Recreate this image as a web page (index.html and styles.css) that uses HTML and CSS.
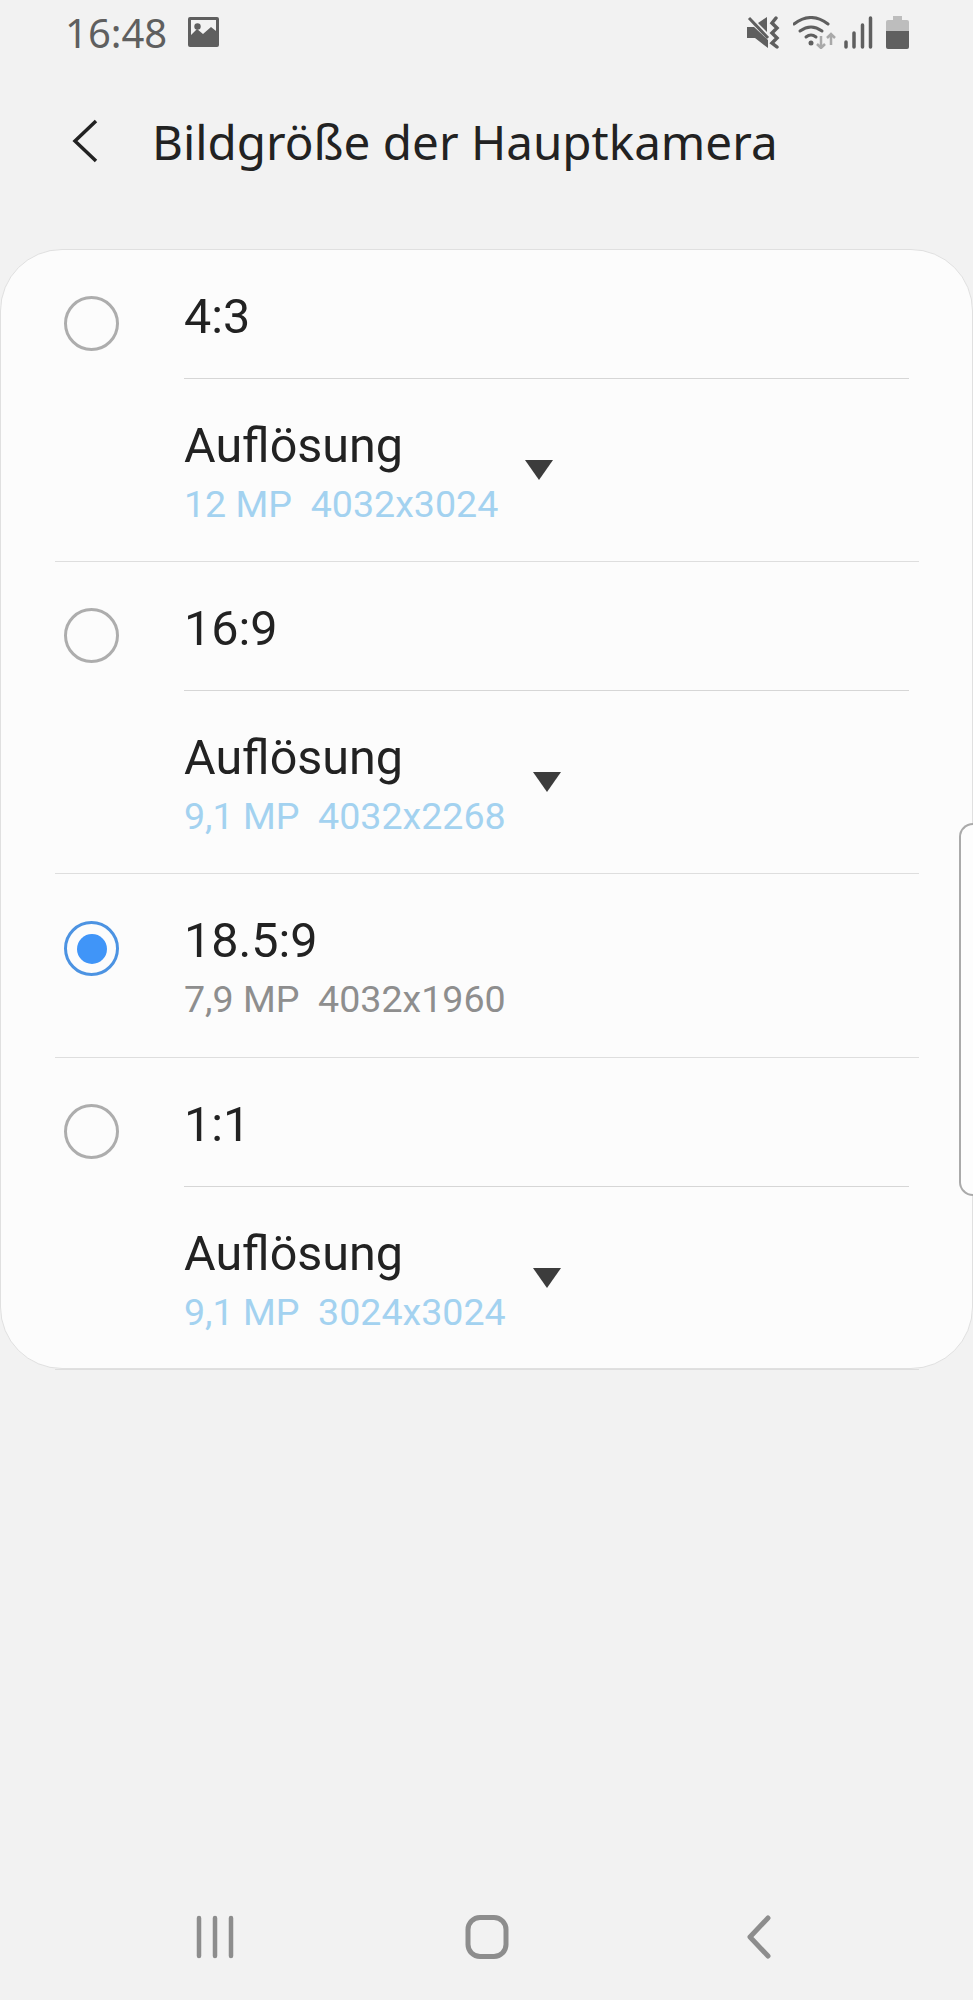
FILE: index.html
```html
<!DOCTYPE html>
<html lang="de">
<head>
    <meta charset="UTF-8">
    <meta name="viewport" content="width=device-width, initial-scale=1.0">
    <title>Bildgröße der Hauptkamera</title>
    <link rel="stylesheet" href="styles.css">
</head>
<body>
    <div class="screen">
        <div class="status-bar">
            <span class="status-time">16:48</span>
            <svg class="icon-image" viewBox="0 0 31 30">
                <path fill="#5f5f5f" fill-rule="evenodd" d="M2 0h27a2 2 0 0 1 2 2v26a2 2 0 0 1-2 2H2a2 2 0 0 1-2-2V2a2 2 0 0 1 2-2zM3 3v15l6-6 6 5 8-7 5 4V3z"/>
                <circle cx="9.500" cy="9.500" r="3.200" fill="#5f5f5f"/>
            </svg>
            <div class="status-right">
                <svg class="icon-mute" viewBox="0 0 33 33">
                    <path fill="#5f5f5f" d="M0 11h7l14 13v8L8 22H0zM11 7l9-6v15z"/>
                    <path fill="none" stroke="#5f5f5f" stroke-width="3" d="M2 2l19 20"/>
                    <path fill="none" stroke="#5f5f5f" stroke-width="3.500" stroke-linecap="round" d="M29 2l-4 5 5 5-5 5 5 5-5 5 5 4"/>
                </svg>
                <svg class="icon-wifi" viewBox="0 0 44 33">
                    <g fill="none" stroke="#5f5f5f" stroke-width="3" stroke-linecap="round">
                        <path d="M1 8q17-13 34 0"/>
                        <path d="M7 15q11-8 22 0"/>
                        <path d="M13 21q5-4 10 0"/>
                    </g>
                    <circle cx="18" cy="27" r="2.500" fill="#5f5f5f"/>
                    <path fill="none" stroke="#a9a9a9" stroke-width="2.500" d="M28 20v12m-4-4l4 4 4-4M38 29V18m-4 4l4-4 4 4"/>
                </svg>
                <svg class="icon-signal" viewBox="0 0 29 33">
                    <g fill="none" stroke="#5f5f5f" stroke-width="3.500" stroke-linecap="round">
                        <path d="M2 26v5M10 17v14M18.500 9v22M26.500 2v29"/>
                    </g>
                </svg>
                <svg class="icon-battery" viewBox="0 0 23 33">
                    <path fill="#bdbdbd" d="M7 0h9v4h5a2 2 0 0 1 2 2v11H0V6a2 2 0 0 1 2-2h5z"/>
                    <path fill="#5f5f5f" d="M0 15h23v16a2 2 0 0 1-2 2H2a2 2 0 0 1-2-2z"/>
                </svg>
            </div>
        </div>

        <div class="title-bar">
            <svg class="icon-back" viewBox="0 0 26 44">
                <path fill="none" stroke="#222" stroke-width="3.500" d="M24 2L3 22l21 20"/>
            </svg>
            <h1>Bildgröße der Hauptkamera</h1>
        </div>

        <div class="card">
            <div class="option">
                <span class="radio"></span>
                <div class="option-body">
                    <div class="option-head"><span class="option-name">4:3</span></div>
                    <div class="option-select">
                        <div>
                            <div class="option-name">Auflösung</div>
                            <div class="option-sub sub-blue">12 MP&nbsp; 4032x3024</div>
                        </div>
                        <span class="caret"></span>
                    </div>
                </div>
            </div>
            <div class="option">
                <span class="radio"></span>
                <div class="option-body">
                    <div class="option-head"><span class="option-name">16:9</span></div>
                    <div class="option-select">
                        <div>
                            <div class="option-name">Auflösung</div>
                            <div class="option-sub sub-blue">9,1 MP&nbsp; 4032x2268</div>
                        </div>
                        <span class="caret"></span>
                    </div>
                </div>
            </div>
            <div class="option">
                <span class="radio radio-on"></span>
                <div class="option-body option-single">
                    <div class="option-name">18.5:9</div>
                    <div class="option-sub">7,9 MP&nbsp; 4032x1960</div>
                </div>
            </div>
            <div class="option">
                <span class="radio"></span>
                <div class="option-body">
                    <div class="option-head"><span class="option-name">1:1</span></div>
                    <div class="option-select">
                        <div>
                            <div class="option-name">Auflösung</div>
                            <div class="option-sub sub-blue">9,1 MP&nbsp; 3024x3024</div>
                        </div>
                        <span class="caret"></span>
                    </div>
                </div>
            </div>
            <div class="scroll-thumb"></div>
        </div>

        <div class="nav-bar">
            <svg class="nav-icon" viewBox="0 0 44 44">
                <path fill="none" stroke="#8d8d8d" stroke-width="4.500" stroke-linecap="round" d="M6 3v38M22 3v38M38 3v38"/>
            </svg>
            <svg class="nav-icon" viewBox="0 0 44 44">
                <rect x="3" y="2.500" width="38" height="39" rx="12" fill="none" stroke="#8d8d8d" stroke-width="5"/>
            </svg>
            <svg class="nav-icon" viewBox="0 0 44 44">
                <path fill="none" stroke="#8d8d8d" stroke-width="5" stroke-linecap="round" stroke-linejoin="round" d="M31 3L13 22l18 19"/>
            </svg>
        </div>
    </div>
</body>
</html>
```

FILE: styles.css
```css
* {
    margin: 0;
    padding: 0;
    box-sizing: border-box;
}

html, body {
    background: #f2f2f2;
}

.screen {
    height: 2000px;
    display: flex;
    flex-direction: column;
    font-family: Roboto, 'Liberation Sans', sans-serif;
    color: #222;
}

.status-bar {
    height: 64px;
    padding: 0 64px 0 65px;
    display: flex;
    align-items: center;
    color: #5f5f5f;
}

.status-time {
    font-family: 'Noto Sans', sans-serif;
    font-size: 40px;
}

.status-right {
    margin-left: auto;
    display: flex;
    align-items: center;
}

.icon-image {
    width: 31px;
    height: 30px;
    margin-left: 21px;
}

.icon-mute {
    width: 33px;
    height: 33px;
}

.icon-wifi {
    width: 44px;
    height: 33px;
    margin-left: 13px;
}

.icon-signal {
    width: 29px;
    height: 33px;
    margin-left: 7px;
}

.icon-battery {
    width: 23px;
    height: 33px;
    margin-left: 13px;
}

.title-bar {
    height: 185px;
    padding: 0 0 32px 72px;
    display: flex;
    align-items: center;
}

.icon-back {
    width: 26px;
    height: 44px;
}

.title-bar h1 {
    margin: 1px 0 0 54px;
    font-family: 'Noto Sans', sans-serif;
    font-size: 47.600px;
    font-weight: 400;
    white-space: nowrap;
}

.card {
    position: relative;
    height: 1120px;
    background: #fcfcfc;
    border: 1px solid #e0e0e0;
    border-radius: 62px;
}

.option {
    margin: 0 53px 0 54px;
    padding-left: 9px;
    display: flex;
    border-bottom: 1px solid #dedede;
}

.option:last-of-type {
    border-bottom: none;
}

.radio {
    flex: none;
    width: 55px;
    height: 55px;
    margin-top: 46px;
    border: 3px solid #adadad;
    border-radius: 50%;
}

.radio-on {
    position: relative;
    margin-top: 47px;
    border-color: #4c93e2;
}

.radio-on::after {
    content: "";
    position: absolute;
    top: 9.500px;
    left: 9.500px;
    width: 30px;
    height: 30px;
    border-radius: 50%;
    background: #4095f8;
}

.option-body {
    flex: 1;
    margin: 0 10px 0 65px;
}

.option-head {
    height: 129px;
    padding-top: 39px;
    border-bottom: 1px solid #d6d6d6;
}

.option-select {
    height: 182px;
    padding-top: 39px;
    display: flex;
}

.option-single {
    height: 183px;
    padding-top: 39px;
}

.option-name {
    font-size: 48.500px;
    line-height: 56px;
}

.option-sub {
    margin-top: 8px;
    font-size: 37.600px;
    line-height: 44px;
    color: #8e8e8e;
}

.sub-blue {
    color: #a3d2f0;
}

.caret {
    width: 0;
    height: 0;
    margin: 42px 0 0 27px;
    border-left: 14.500px solid transparent;
    border-right: 14.500px solid transparent;
    border-top: 20px solid #3c3c3c;
}

.scroll-thumb {
    position: absolute;
    top: 573px;
    right: -1px;
    width: 14px;
    height: 373px;
    background: #fdfdfd;
    border: 2px solid #aaa;
    border-right: none;
    border-radius: 14px 0 0 14px;
}

.nav-bar {
    margin-top: auto;
    height: 127px;
    padding-top: 42px;
    display: flex;
    justify-content: center;
    align-items: flex-start;
    gap: 228px;
}

.nav-icon {
    width: 44px;
    height: 44px;
}
```
